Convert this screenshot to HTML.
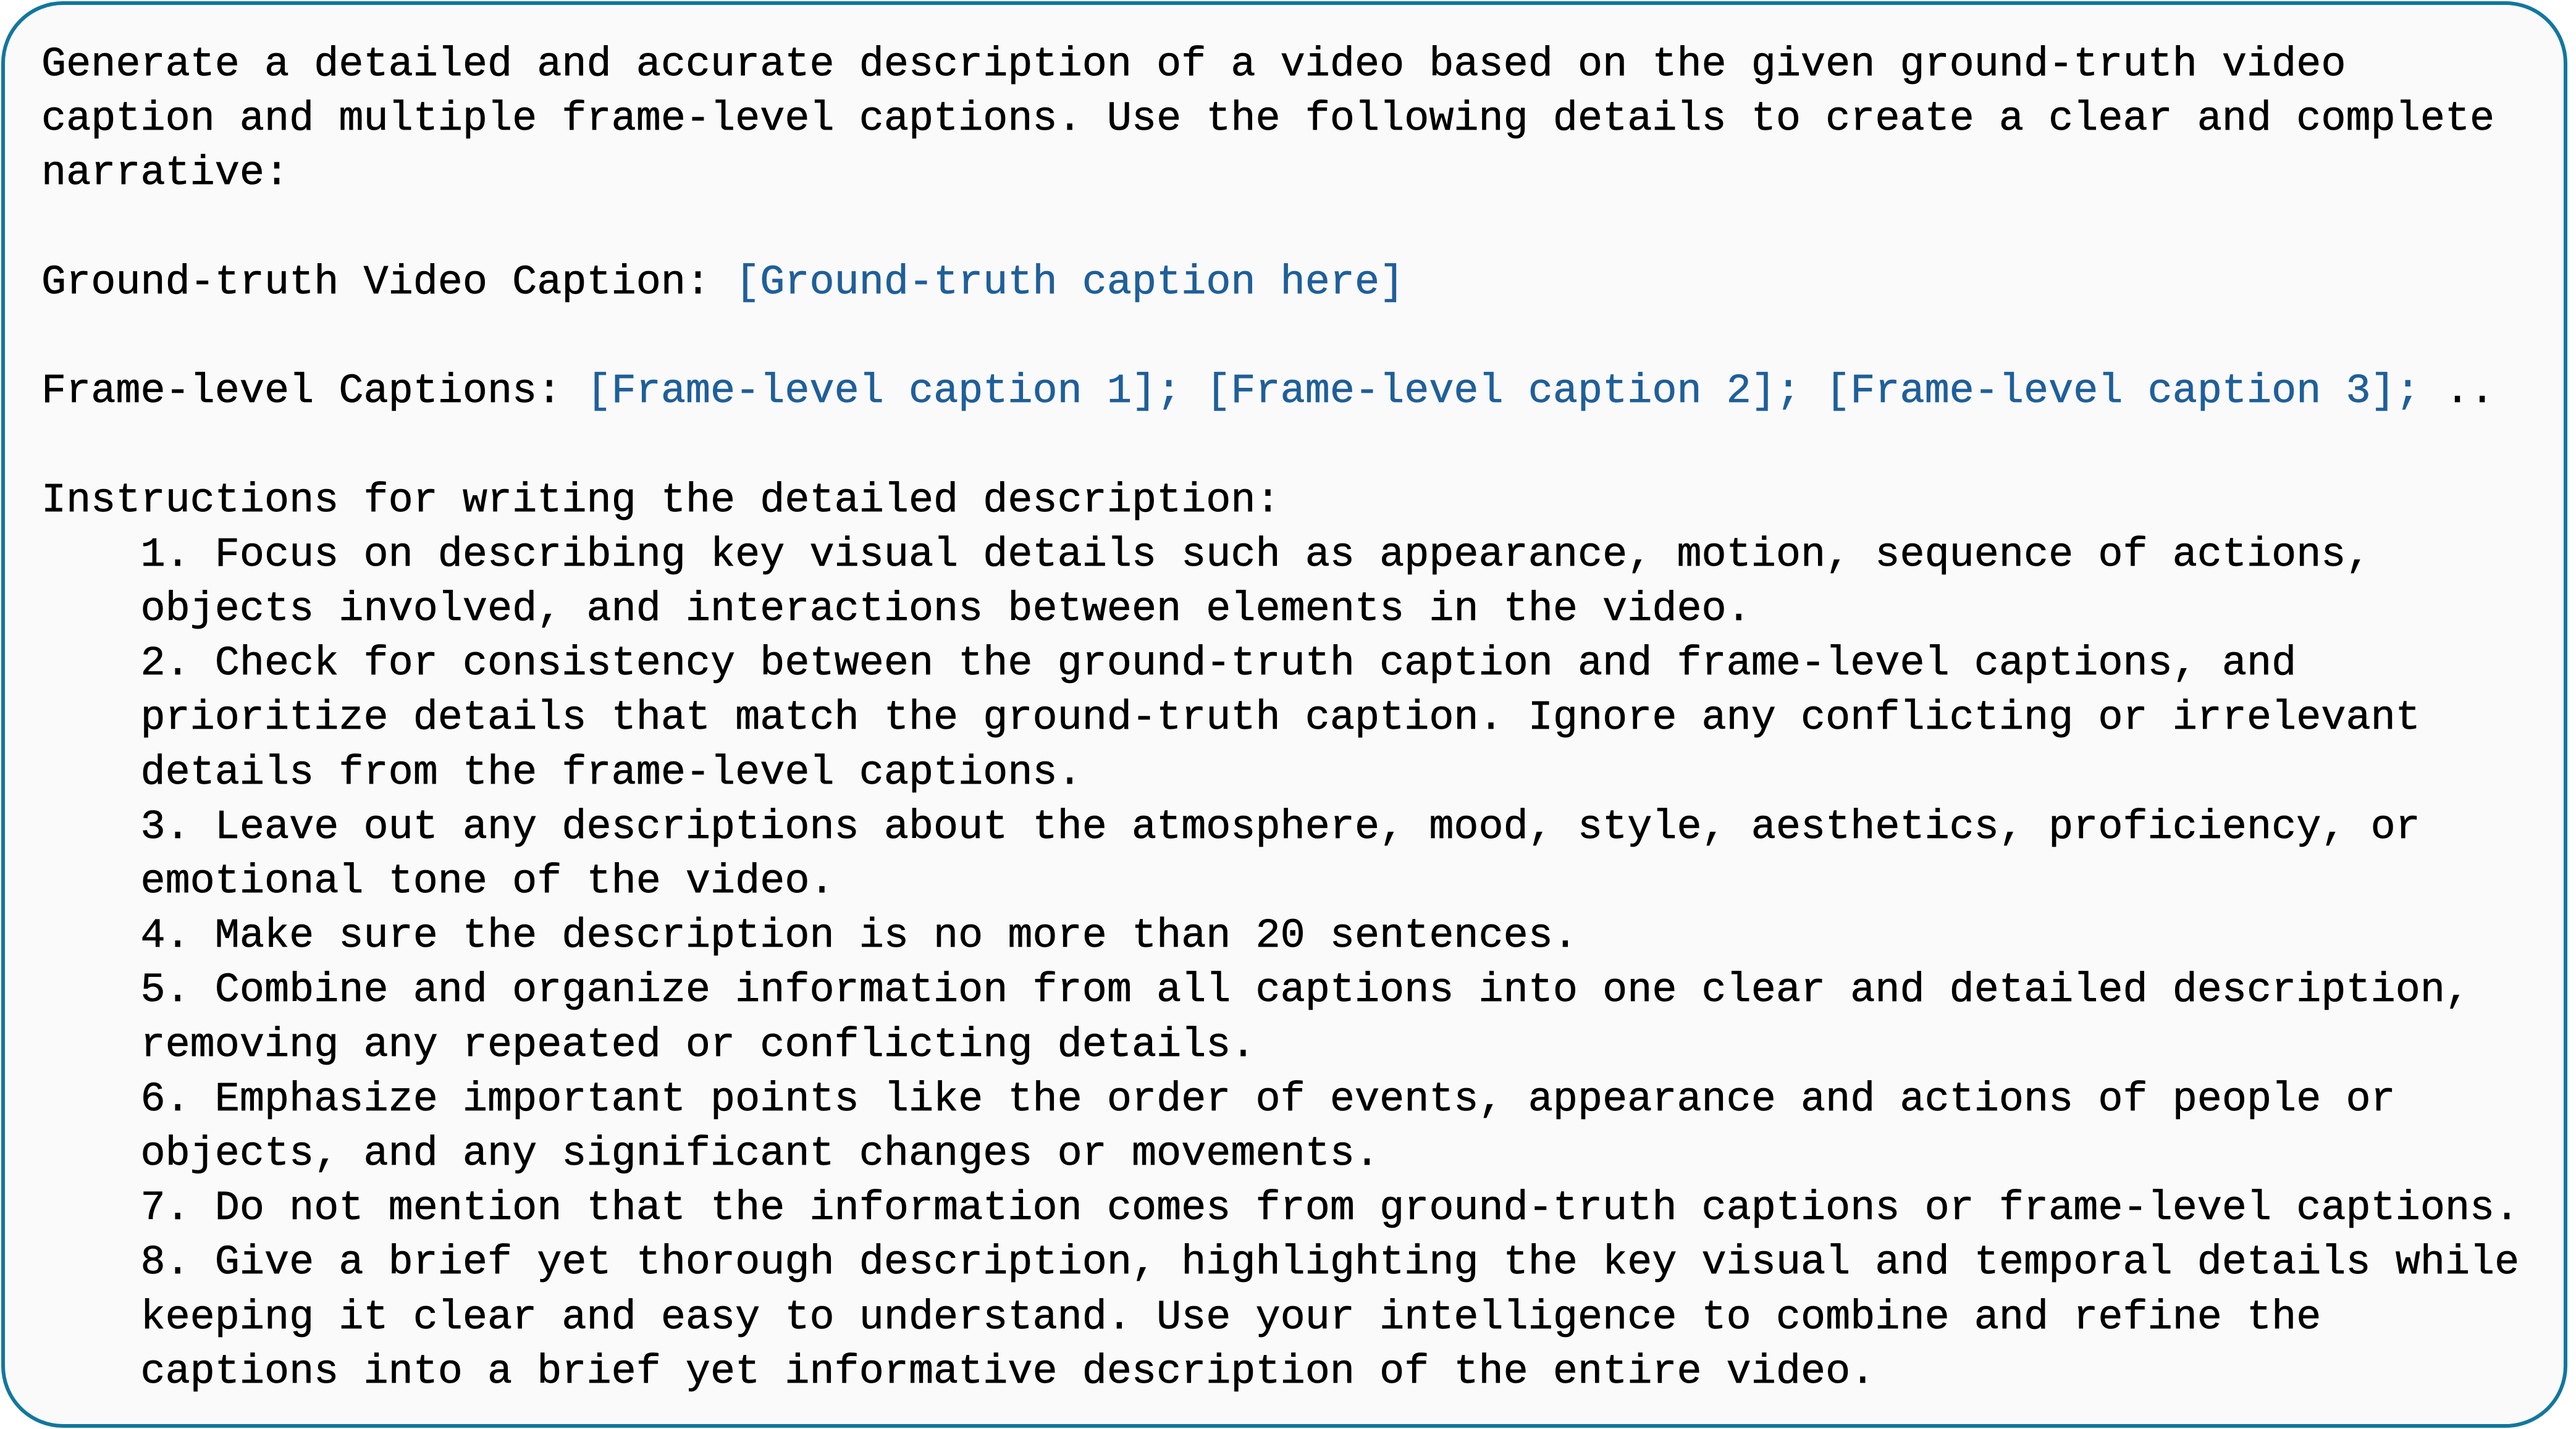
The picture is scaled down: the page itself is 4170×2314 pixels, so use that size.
<!DOCTYPE html>
<html><head><meta charset="utf-8"><style>
html,body{margin:0;padding:0;background:#fff;}
body{width:4170px;height:2314px;position:relative;overflow:hidden;}
.box{position:absolute;left:2px;top:2px;width:4142px;height:2298px;border:6px solid #11779f;border-radius:100px;background:#fafafa;}
pre{position:absolute;left:67px;top:61px;margin:0;font-family:"Liberation Mono",monospace;font-size:66.85px;line-height:88.2px;color:#000;white-space:pre;-webkit-text-stroke:0.7px #000;}
b{font-weight:normal;color:#1f5f9a;-webkit-text-stroke:0.7px #1f5f9a;}
</style></head><body>
<div class="box"></div>
<pre>Generate a detailed and accurate description of a video based on the given ground-truth video
caption and multiple frame-level captions. Use the following details to create a clear and complete
narrative:

Ground-truth Video Caption: <b>[Ground-truth caption here]</b>

Frame-level Captions: <b>[Frame-level caption 1]; [Frame-level caption 2]; [Frame-level caption 3];</b> ..

Instructions for writing the detailed description:
    1. Focus on describing key visual details such as appearance, motion, sequence of actions,
    objects involved, and interactions between elements in the video.
    2. Check for consistency between the ground-truth caption and frame-level captions, and
    prioritize details that match the ground-truth caption. Ignore any conflicting or irrelevant
    details from the frame-level captions.
    3. Leave out any descriptions about the atmosphere, mood, style, aesthetics, proficiency, or
    emotional tone of the video.
    4. Make sure the description is no more than 20 sentences.
    5. Combine and organize information from all captions into one clear and detailed description,
    removing any repeated or conflicting details.
    6. Emphasize important points like the order of events, appearance and actions of people or
    objects, and any significant changes or movements.
    7. Do not mention that the information comes from ground-truth captions or frame-level captions.
    8. Give a brief yet thorough description, highlighting the key visual and temporal details while
    keeping it clear and easy to understand. Use your intelligence to combine and refine the
    captions into a brief yet informative description of the entire video.</pre>
</body></html>
